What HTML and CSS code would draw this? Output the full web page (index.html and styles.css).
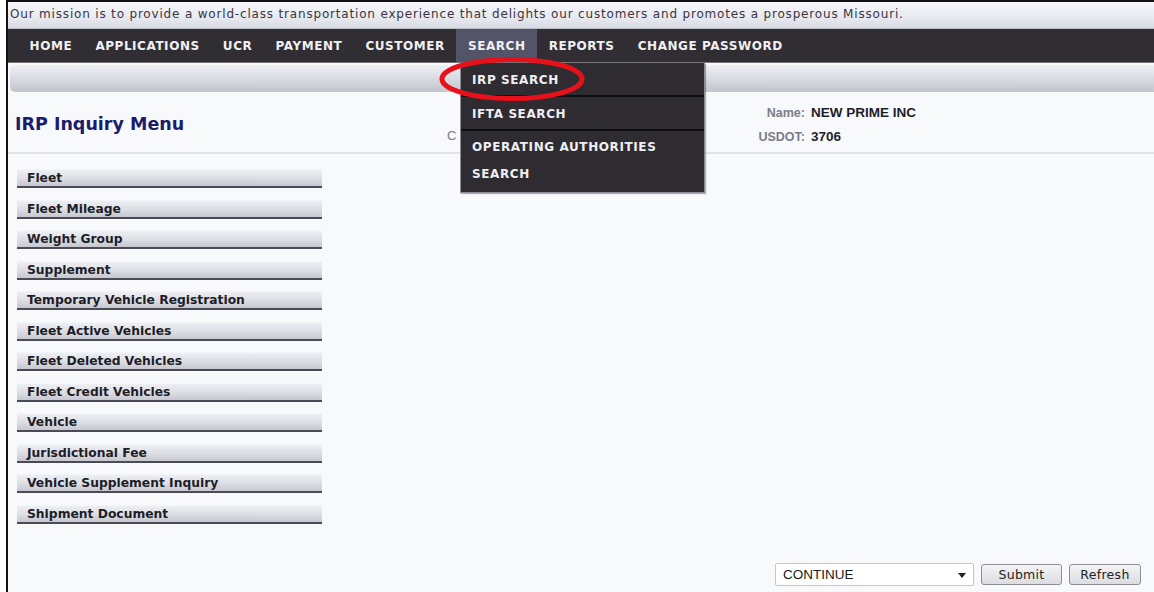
FILE: index.html
```html
<!DOCTYPE html>
<html lang="en">
<head>
<meta charset="utf-8">
<title>IRP Inquiry Menu</title>
<link rel="stylesheet" href="styles.css">
</head>
<body>
<div class="frame">
  <div class="mission">Our mission is to provide a world-class transportation experience that delights our customers and promotes a prosperous Missouri.</div>
  <nav class="nav">
    <a class="nav-item">HOME</a>
    <a class="nav-item">APPLICATIONS</a>
    <a class="nav-item">UCR</a>
    <a class="nav-item">PAYMENT</a>
    <a class="nav-item">CUSTOMER</a>
    <a class="nav-item active">SEARCH</a>
    <a class="nav-item">REPORTS</a>
    <a class="nav-item">CHANGE PASSWORD</a>
  </nav>
  <div class="subbar"></div>
  <main class="main">
    <div class="header">
      <h1 class="title">IRP Inquiry Menu</h1>
      <div class="customer-id"><span class="lbl">Customer ID:</span></div>
      <dl class="info">
        <div class="info-row"><dt>Name:</dt><dd>NEW PRIME INC</dd></div>
        <div class="info-row"><dt>USDOT:</dt><dd>3706</dd></div>
      </dl>
    </div>
    <ul class="menu">
      <li class="menu-btn">Fleet</li>
      <li class="menu-btn">Fleet Mileage</li>
      <li class="menu-btn">Weight Group</li>
      <li class="menu-btn">Supplement</li>
      <li class="menu-btn">Temporary Vehicle Registration</li>
      <li class="menu-btn">Fleet Active Vehicles</li>
      <li class="menu-btn">Fleet Deleted Vehicles</li>
      <li class="menu-btn">Fleet Credit Vehicles</li>
      <li class="menu-btn">Vehicle</li>
      <li class="menu-btn">Jurisdictional Fee</li>
      <li class="menu-btn">Vehicle Supplement Inquiry</li>
      <li class="menu-btn">Shipment Document</li>
    </ul>
    <div class="actions">
      <div class="select"><span>CONTINUE</span><span class="caret"></span></div>
      <button class="btn">Submit</button>
      <button class="btn">Refresh</button>
    </div>
  </main>

  <ul class="dropdown">
    <li class="drop-item">IRP SEARCH</li>
    <li class="drop-item">IFTA SEARCH</li>
    <li class="drop-item tall">OPERATING AUTHORITIES SEARCH</li>
  </ul>
  <svg class="ring" width="150" height="46" viewBox="0 0 150 46">
    <ellipse cx="75" cy="23" rx="70" ry="19.5" fill="none" stroke="#e8101a" stroke-width="5"/>
  </svg>
</div>
</body>
</html>
```

FILE: styles.css
```css
* { box-sizing: border-box; }
html, body { margin: 0; padding: 0; background: #ffffff; }
body { font-family: "DejaVu Sans", Verdana, sans-serif; }

.frame {
  position: relative;
  margin-left: 6px;
  height: 592px;
  border-left: 2px solid #111;
  border-top: 2px solid #111;
  display: flex;
  flex-direction: column;
  background: #f8f9fb;
}

.mission {
  height: 27px;
  padding: 5px 0 0 2px;
  font-size: 12px;
  letter-spacing: 0.82px;
  color: #3a3540;
  background: linear-gradient(#f6f7fb, #e8eaf0 60%, #d8dae2);
  border-bottom: 1px solid #b9bbc3;
  white-space: nowrap;
}

.nav {
  height: 34px;
  display: flex;
  align-items: stretch;
  padding-left: 10px;
  background: #302e32;
  border-bottom: 1px solid #777;
}
.nav-item {
  display: flex;
  align-items: center;
  padding: 0 11.6px;
  font-size: 12px;
  font-weight: bold;
  color: #f0f0f4;
  letter-spacing: 0.55px;
}
.nav-item.active { background: #535468; }

.subbar {
  height: 27px;
  margin: 2px 0 0 2px;
  border-radius: 5px 0 0 5px;
  background: linear-gradient(#eef0f5, #d9dbe2 50%, #c3c5cd);
}

.main {
  flex: 1;
  display: flex;
  flex-direction: column;
  background: #f8f9fb;
}

.header {
  height: 62px;
  display: flex;
  align-items: center;
  border-bottom: 2px solid #e2e3e8;
}
.title {
  margin: 0 0 0 7px;
  font-size: 17.5px;
  font-weight: bold;
  color: #1c1b6c;
  width: 432px;
  padding-top: 3px;
}
/* the id label sits under the open search menu; only its first letter shows */
.customer-id {
  align-self: flex-end;
  margin-bottom: 9px;
  font-family: "Liberation Sans", Arial, sans-serif;
  font-size: 13px;
  width: 309px;
}
.customer-id .lbl {
  display: block;
  width: 10px;
  overflow: hidden;
  white-space: nowrap;
}
.lbl { color: #777a86; }

.info { margin: 0; padding-top: 14px; font-family: "Liberation Sans", Arial, sans-serif; }
.info-row { display: flex; align-items: baseline; height: 24px; }
.info dt {
  width: 49px;
  text-align: right;
  font-size: 12.5px;
  font-weight: bold;
  color: #7a7d88;
  margin-right: 6px;
}
.info dd { margin: 0; font-size: 13.5px; font-weight: bold; color: #1e1e2a; }

.menu {
  list-style: none;
  margin: 15px 0 0 9px;
  padding: 0;
  display: flex;
  flex-direction: column;
  gap: 11.5px;
}
.menu-btn {
  width: 305px;
  height: 19px;
  padding: 1px 0 0 10px;
  font-size: 12.3px;
  font-weight: bold;
  color: #1d1d28;
  background: linear-gradient(#eeeff4, #dcdde3 55%, #c6c7cf);
  border-bottom: 2px solid #4a4b55;
  border-top: 1px solid #f2f6fa;
}

.actions {
  margin-top: auto;
  margin-bottom: 6px;
  display: flex;
  justify-content: flex-end;
  align-items: center;
  gap: 7px;
  padding-right: 13px;
}
.select {
  width: 199px;
  height: 23px;
  display: flex;
  align-items: center;
  justify-content: space-between;
  padding: 0 7px 0 7px;
  background: #ffffff;
  border: 1px solid #c4c6cc;
  border-radius: 2px;
  font-family: "Liberation Sans", Arial, sans-serif;
  font-size: 13.5px;
  color: #1a1a1a;
}
.caret {
  width: 0; height: 0;
  border-left: 4px solid transparent;
  border-right: 4px solid transparent;
  border-top: 5px solid #222;
  margin-top: 2px;
}
.btn {
  height: 21px;
  padding: 0;
  font-family: "DejaVu Sans", Verdana, sans-serif;
  font-size: 12.5px;
  letter-spacing: 0.3px;
  color: #222;
  background: linear-gradient(#f4f4f6, #dcdde1);
  border: 1px solid #8d8f96;
  border-radius: 3px;
}
.btn:first-of-type { width: 81px; }
.btn:last-of-type { width: 72px; }

.dropdown {
  position: absolute;
  left: 452px;
  top: 61px;
  width: 245px;
  margin: 0;
  padding: 0;
  list-style: none;
  background: #2e2c30;
  border: 1px solid #8c8c94;
  border-top: none;
  box-shadow: 1px 1px 1px rgba(0,0,0,0.3);
}
.drop-item {
  height: 34px;
  padding: 10px 0 0 11px;
  font-size: 12px;
  font-weight: bold;
  letter-spacing: 0.6px;
  color: #eeeef4;
  border-bottom: 2px solid #0e0d10;
}
.drop-item.tall {
  height: 61px;
  line-height: 27px;
  padding: 3px 40px 0 11px;
  border-bottom: none;
}

.ring {
  position: absolute;
  left: 429px;
  top: 54px;
}
```
